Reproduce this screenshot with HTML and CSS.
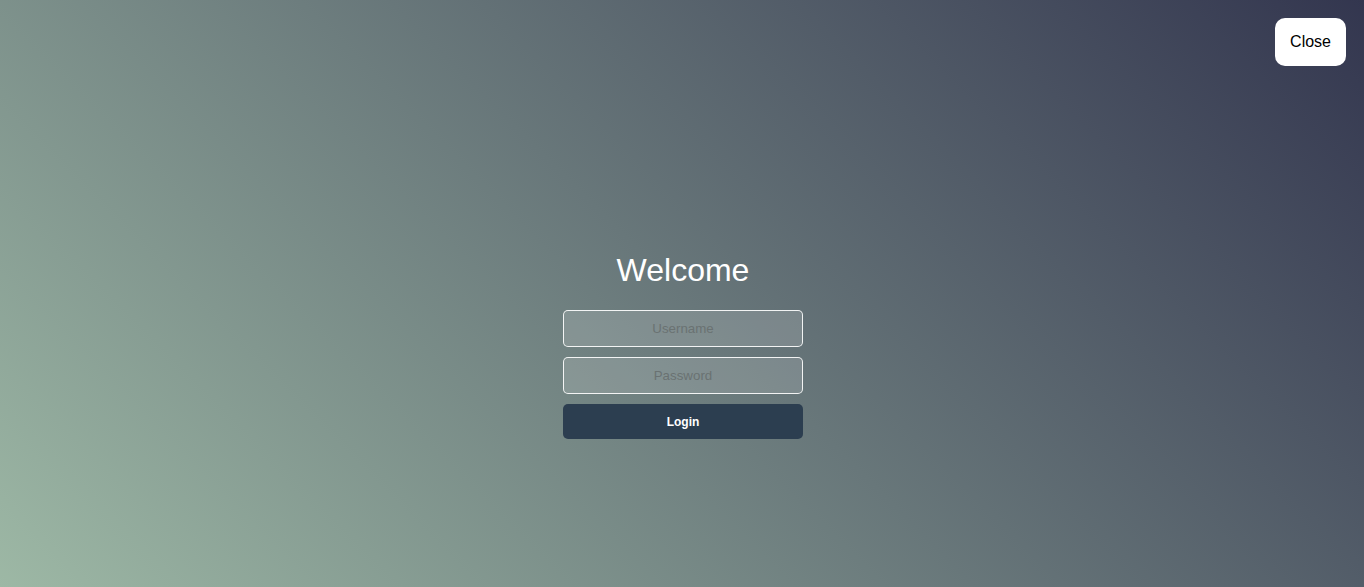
FILE: index.html
```html
<!DOCTYPE html>
<html lang="en">
<head>
<meta charset="utf-8">
<title>Welcome</title>
<link rel="stylesheet" href="styles.css">
</head>
<body>
<button class="close-btn" type="button">Close</button>
<main class="stage">
  <form class="login-form">
    <h1 class="title">Welcome</h1>
    <input class="field" type="text" placeholder="Username">
    <input class="field" type="password" placeholder="Password">
    <button class="login-btn" type="button">Login</button>
  </form>
</main>
</body>
</html>
```
FILE: styles.css
```css
* { box-sizing: border-box; }
html, body { height: 100%; }
body {
  margin: 0;
  font-family: "Liberation Sans", Arial, sans-serif;
  background: linear-gradient(45deg, #9db8a5 0%, #33364f 100%);
  overflow: hidden;
}
.stage {
  height: 100vh;
  padding-top: 100px;
  padding-left: 2px;
  display: flex;
  align-items: center;
  justify-content: center;
}
.login-form {
  width: 240px;
  display: flex;
  flex-direction: column;
  gap: 10px;
}
.title {
  margin: 3px 0 11px;
  font-size: 32px;
  font-weight: normal;
  line-height: 37px;
  color: #fff;
  text-align: center;
}
.field {
  height: 37px;
  padding: 10px;
  border: 1px solid rgba(255, 255, 255, 0.9);
  border-radius: 5px;
  background: rgba(255, 255, 255, 0.15);
  font-family: "Liberation Sans", Arial, sans-serif;
  font-size: 13.33px;
  text-align: center;
  color: #333;
  outline: none;
}
.field::placeholder { color: #6a7272; }
.login-btn {
  height: 35px;
  padding: 1px 0 0;
  border: none;
  border-radius: 5px;
  background: #2c3e50;
  color: #fff;
  font-family: "Liberation Sans", Arial, sans-serif;
  font-size: 12px;
  font-weight: bold;
  cursor: pointer;
}
.close-btn {
  position: absolute;
  top: 18px;
  right: 18px;
  padding: 15px;
  border: none;
  border-radius: 10px;
  background: #fff;
  color: #000;
  font-family: "Liberation Sans", Arial, sans-serif;
  font-size: 16px;
  line-height: 18px;
  cursor: pointer;
}
```
